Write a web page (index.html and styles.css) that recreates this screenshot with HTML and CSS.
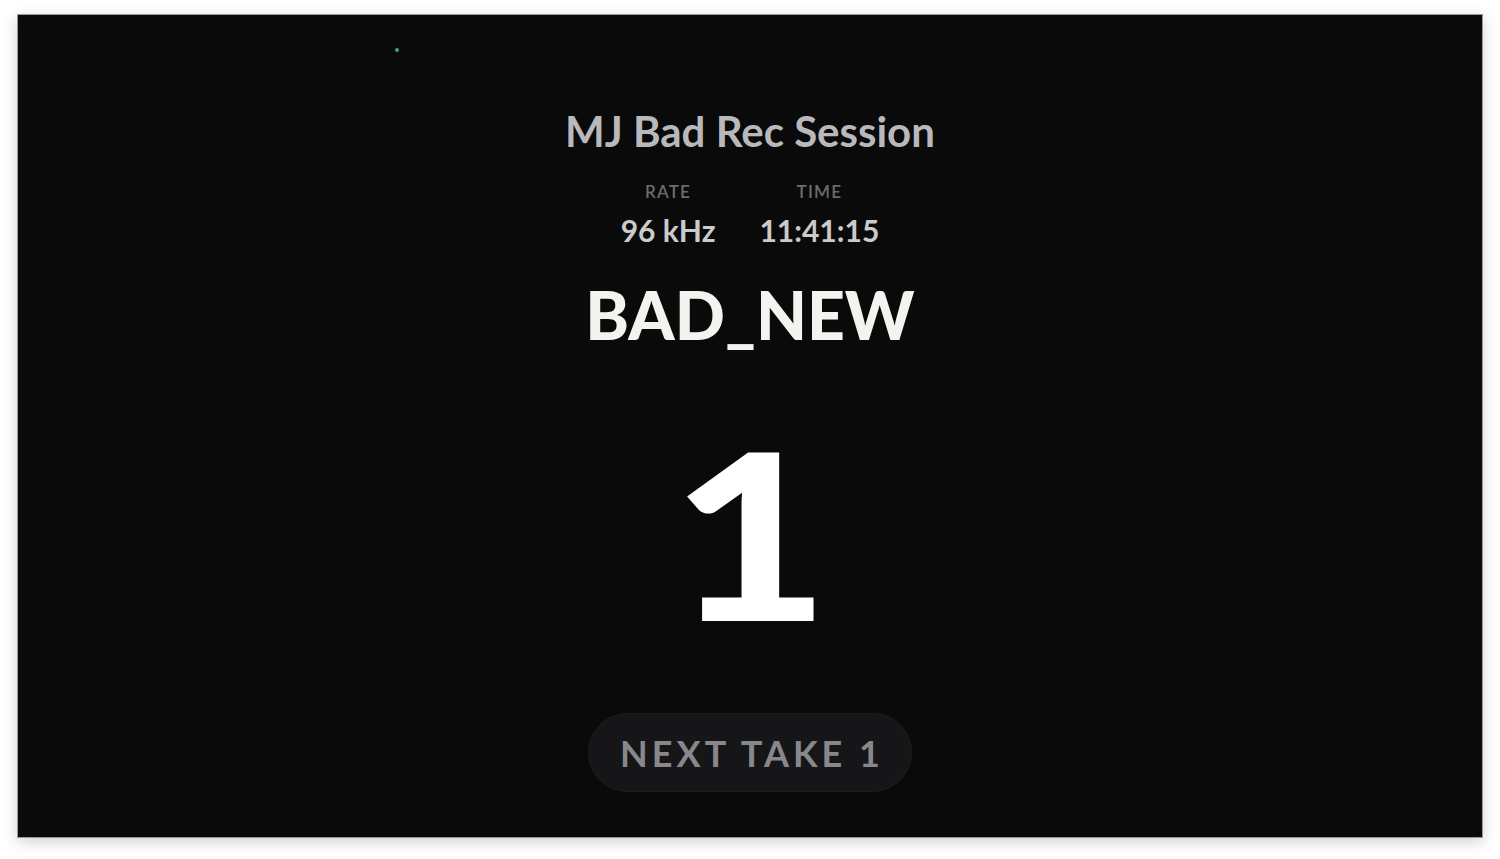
FILE: index.html
```html
<!DOCTYPE html>
<html>
<head>
<meta charset="utf-8">
<link rel="stylesheet" href="styles.css">
</head>
<body>
<div class="window">
  <span class="status-dot"></span>
  <h1 class="title">MJ Bad Rec Session</h1>
  <div class="meta">
    <div class="meta-item">
      <div class="meta-label">RATE</div>
      <div class="meta-value">96 kHz</div>
    </div>
    <div class="meta-item">
      <div class="meta-label">TIME</div>
      <div class="meta-value">11:41:15</div>
    </div>
  </div>
  <div class="song">BAD_NEW</div>
  <div class="take">1</div>
  <button class="next">NEXT TAKE 1</button>
</div>
</body>
</html>
```
FILE: styles.css
```css
html, body {
  margin: 0;
  padding: 0;
  background: #ffffff;
  width: 1500px;
  height: 859px;
  overflow: hidden;
  font-family: Lato, "Noto Sans", sans-serif;
}
.window {
  position: relative;
  box-sizing: border-box;
  margin: 14px 0 0 17px;
  width: 1466px;
  height: 824px;
  background: #0a0a0a;
  border: 1px solid #9a9a9a;
  box-shadow: 0 4px 14px rgba(0,0,0,0.18);
  display: flex;
  flex-direction: column;
  align-items: center;
  padding-top: 90px;
}
.status-dot {
  position: absolute;
  left: 377px;
  top: 33px;
  width: 4px;
  height: 4px;
  border-radius: 50%;
  background: #4f9a66;
}
.title {
  margin: 0;
  font-size: 42px;
  line-height: 52px;
  font-weight: 700;
  color: #b9b9bd;
}
.meta {
  display: flex;
  gap: 44px;
  margin-top: 25px;
}
.meta-item {
  display: flex;
  flex-direction: column;
  align-items: center;
}
.meta-label {
  font-size: 17px;
  line-height: 20px;
  letter-spacing: 1.2px;
  font-weight: 600;
  color: #6c6c70;
}
.meta-value {
  margin-top: 10px;
  font-size: 30px;
  line-height: 36px;
  font-weight: 700;
  color: #cbcbcb;
}
.song {
  margin-top: 25px;
  font-size: 66px;
  line-height: 84px;
  font-weight: 900;
  color: #f3f3ef;
}
.take {
  margin-top: 54px;
  font-size: 232px;
  line-height: 240px;
  font-weight: 900;
  color: #ffffff;
  transform: scaleX(1.18);
}
.next {
  margin-top: 62px;
  width: 324px;
  height: 79px;
  border-radius: 40px;
  background: #161618;
  border: 1px solid #1e1e20;
  color: #88888c;
  font-family: Lato, "Noto Sans", sans-serif;
  font-size: 36px;
  font-weight: 700;
  letter-spacing: 4px;
  padding: 0 0 0 4px;
}
```
